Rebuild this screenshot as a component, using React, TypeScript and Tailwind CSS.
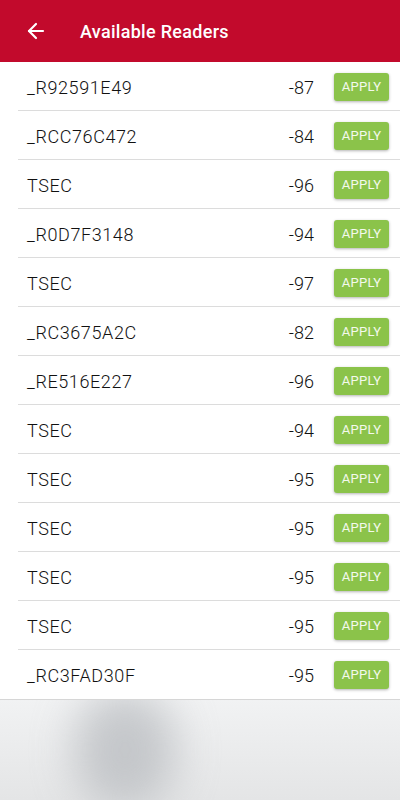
import { ArrowLeft } from "lucide-react";

const readers = [
  { name: "_R92591E49", rssi: -87 },
  { name: "_RCC76C472", rssi: -84 },
  { name: "TSEC", rssi: -96 },
  { name: "_R0D7F3148", rssi: -94 },
  { name: "TSEC", rssi: -97 },
  { name: "_RC3675A2C", rssi: -82 },
  { name: "_RE516E227", rssi: -96 },
  { name: "TSEC", rssi: -94 },
  { name: "TSEC", rssi: -95 },
  { name: "TSEC", rssi: -95 },
  { name: "TSEC", rssi: -95 },
  { name: "TSEC", rssi: -95 },
  { name: "_RC3FAD30F", rssi: -95 },
];

export default function App() {
  return (
    <div
      className="w-[400px] h-[800px] flex flex-col overflow-hidden bg-[#e6e7e8]"
      style={{ fontFamily: "Roboto, 'Noto Sans', sans-serif" }}
    >
      {/* Toolbar */}
      <header className="h-[62px] shrink-0 bg-[#c20a2c] flex items-center px-[24px] gap-[32px] text-white">
        <ArrowLeft size={24} strokeWidth={2.2} />
        <h1 className="text-[18px] font-medium tracking-[0.3px]">Available Readers</h1>
      </header>

      {/* Reader list */}
      <div className="bg-white border-b border-[#d6d6d6] shrink-0">
        {readers.map((r, i) => (
          <div key={i} className="relative h-[49px] flex items-center pl-[27px] pr-[11px]">
            <span className="flex-1 pt-[2px] text-[18px] font-light text-[#111] tracking-[0.6px]">{r.name}</span>
            <span className="pt-[2px] text-[18px] font-light text-[#111] mr-[20px]">{r.rssi}</span>
            <button className="w-[55px] h-[28px] rounded-[3px] bg-[#8bc34a] text-[13px] text-white/90 tracking-[0.3px] shadow-[0_1px_3px_rgba(0,0,0,0.3)]">
              APPLY
            </button>
            {i < readers.length - 1 && (
              <div className="absolute left-[18px] right-0 bottom-0 h-px bg-[#dcdcdc]" />
            )}
          </div>
        ))}
      </div>

      {/* Blurred background below */}
      <div className="relative flex-1 bg-gradient-to-b from-[#f1f2f3] to-[#e4e5e6] overflow-hidden">
        <div className="absolute left-[75px] top-[-10px] w-[100px] h-[120px] rounded-full bg-[#b8bbbf] blur-[22px] opacity-75" />
      </div>
    </div>
  );
}
